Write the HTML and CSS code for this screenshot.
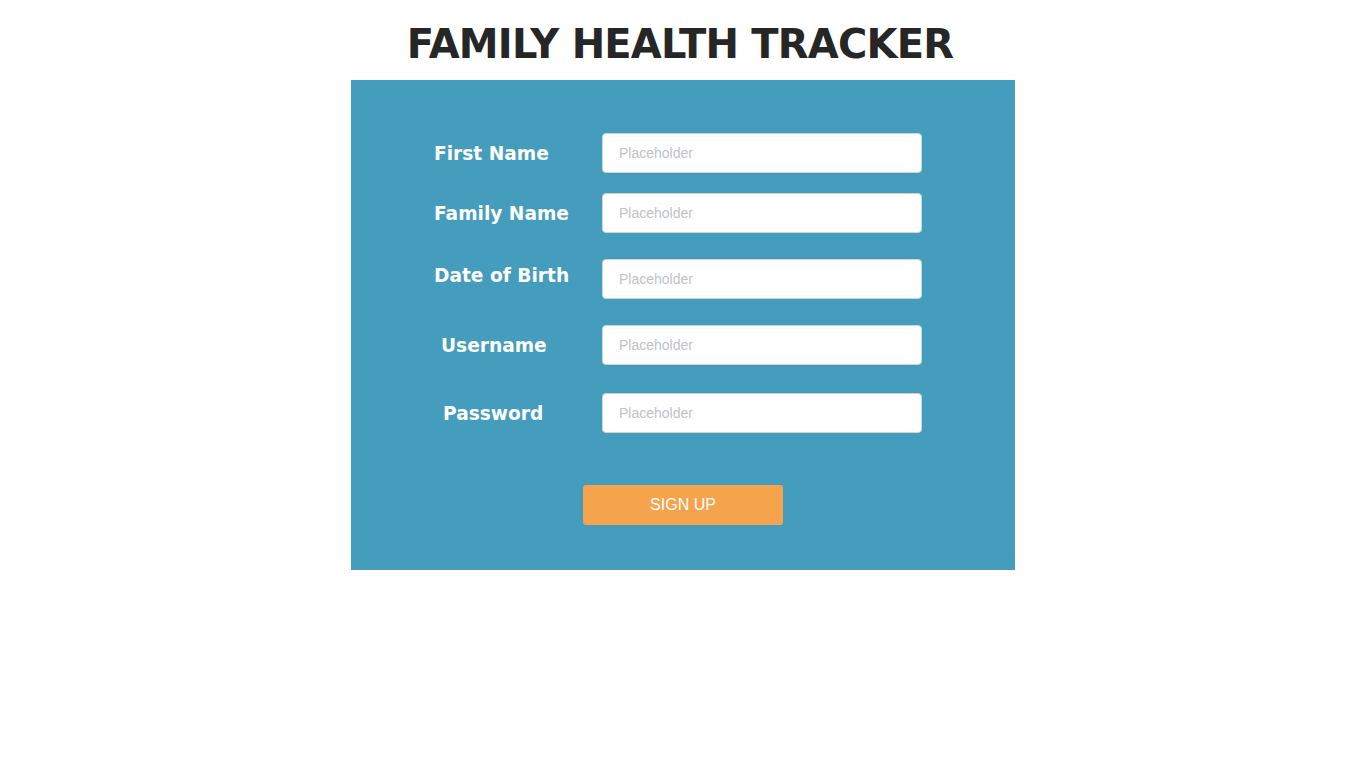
FILE: index.html
```html
<!DOCTYPE html>
<html>
<head>
<meta charset="utf-8">
<title>Family Health Tracker</title>
<link rel="stylesheet" href="styles.css">
</head>
<body>
<h1 class="title">FAMILY HEALTH TRACKER</h1>
<form class="panel">
  <div class="row">
    <label class="label">First Name</label>
    <input class="field" type="text" placeholder="Placeholder">
  </div>
  <div class="row row-g20">
    <label class="label">Family Name</label>
    <input class="field" type="text" placeholder="Placeholder">
  </div>
  <div class="row row-g26 row-dob">
    <label class="label">Date of Birth</label>
    <input class="field" type="text" placeholder="Placeholder">
  </div>
  <div class="row row-g26">
    <label class="label label-user">Username</label>
    <input class="field" type="text" placeholder="Placeholder">
  </div>
  <div class="row row-g28">
    <label class="label label-pass">Password</label>
    <input class="field" type="password" placeholder="Placeholder">
  </div>
  <div class="actions">
    <button class="btn" type="button">SIGN UP</button>
  </div>
</form>
</body>
</html>
```
FILE: styles.css
```css
html, body {
  margin: 0;
  padding: 0;
  background: #ffffff;
}
.title {
  margin: 0;
  height: 80px;
  box-sizing: border-box;
  padding: 20px 6px 0 0;
  line-height: 48px;
  text-align: center;
  font-family: "DejaVu Sans", sans-serif;
  font-weight: bold;
  font-size: 40px;
  letter-spacing: -0.8px;
  color: #262626;
}
.panel {
  width: 664px;
  height: 490px;
  margin: 0 auto;
  box-sizing: border-box;
  background: #459dbd;
  padding: 53px 0 0 83px;
  display: flex;
  flex-direction: column;
}
.row {
  display: flex;
  align-items: center;
  height: 40px;
}
.row-g20 { margin-top: 20px; }
.row-g26 { margin-top: 26px; }
.row-g28 { margin-top: 28px; }
.row-dob .label { margin-top: -8px; }
.label {
  width: 168px;
  flex: none;
  box-sizing: border-box;
  font-family: "DejaVu Sans", sans-serif;
  font-weight: bold;
  font-size: 18.6px;
  color: #ffffff;
}
.label-user { padding-left: 7px; }
.label-pass { padding-left: 9px; }
.field {
  width: 320px;
  height: 40px;
  box-sizing: border-box;
  border: 1px solid #cfd3d6;
  border-radius: 4px;
  background: #ffffff;
  padding: 0 16px;
  font-family: "Liberation Sans", Arial, sans-serif;
  font-size: 14px;
  color: #333;
  outline: none;
}
.field::placeholder {
  color: #bfc3c6;
}
.actions {
  margin-top: 52px;
  padding-left: 149px;
  display: flex;
}
.btn {
  width: 200px;
  height: 40px;
  border: none;
  border-radius: 3px;
  background: #f5a34d;
  color: #ffffff;
  font-family: "Liberation Sans", Arial, sans-serif;
  font-size: 16px;
  cursor: pointer;
}
```
